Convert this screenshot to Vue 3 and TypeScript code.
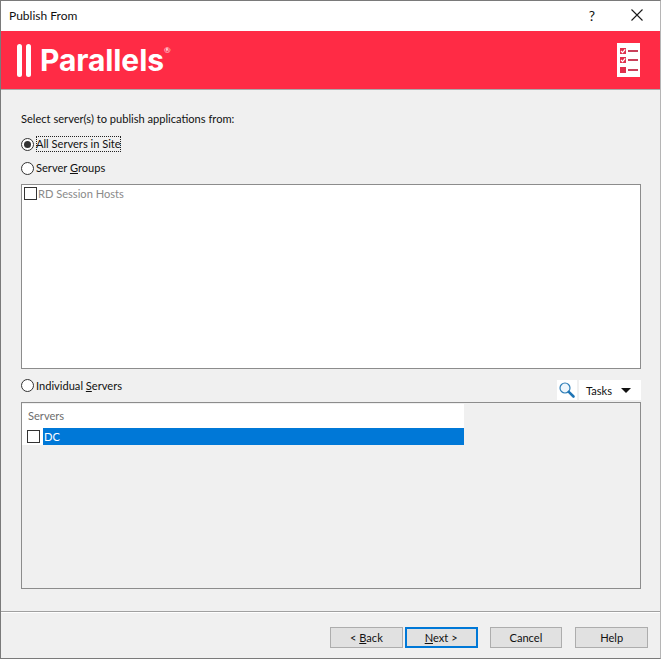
<template>
  <div class="dialog">
    <header class="titlebar">
      <span class="title">Publish From</span>
      <span class="help-btn">?</span>
      <svg class="close-btn" width="12" height="12" viewBox="0 0 12 12">
        <path d="M0.5 0.5 L11.5 11.5 M11.5 0.5 L0.5 11.5" stroke="#1a1a1a" stroke-width="1.1" fill="none" />
      </svg>
    </header>

    <div class="banner">
      <div class="logo">
        <span class="logo-bars"><i></i><i></i></span>
        <span class="logo-word">Parallels</span>
        <span class="logo-reg">®</span>
      </div>
      <svg class="banner-icon" width="23" height="34" viewBox="0 0 23 34">
        <rect width="23" height="34" fill="#fff" />
        <rect x="3" y="5" width="6" height="6" fill="#e0304c" />
        <rect x="3" y="14" width="6" height="6" fill="#e0304c" />
        <rect x="3" y="24" width="6" height="6" fill="#e0304c" />
        <path d="M4 8 L5.6 9.6 L8.2 6.4 M4 17 L5.6 18.6 L8.2 15.4" stroke="#fff" stroke-width="1.2" fill="none" />
        <rect x="11" y="7" width="10" height="2" fill="#c9405a" />
        <rect x="11" y="16" width="10" height="2" fill="#c9405a" />
        <rect x="11" y="26" width="10" height="2" fill="#c9405a" />
      </svg>
    </div>

    <main class="content">
      <p class="prompt">Select server(s) to publish applications from:</p>

      <label class="radio-row first">
        <span class="radio checked"></span>
        <span class="focused">All Servers in Site</span>
      </label>
      <label class="radio-row second">
        <span class="radio"></span>
        <span>Server <u>G</u>roups</span>
      </label>

      <div class="group-list">
        <div class="check-row disabled">
          <span class="check"></span>
          <span>RD Session Hosts</span>
        </div>
      </div>

      <div class="individual-row">
        <label class="radio-row">
          <span class="radio"></span>
          <span>Individual <u>S</u>ervers</span>
        </label>
        <div class="tools">
          <span class="tool search">
            <svg width="18" height="18" viewBox="0 0 18 18">
              <circle cx="7" cy="7" r="5" fill="#eef6fc" stroke="#2f7fb8" stroke-width="1.2" />
              <path d="M10.8 10.8 L15.5 15.5" stroke="#1f75b5" stroke-width="2.6" stroke-linecap="round" />
            </svg>
          </span>
          <span class="tool tasks">
            Tasks
            <span class="caret"></span>
          </span>
        </div>
      </div>

      <div class="server-box">
        <div class="server-table">
          <div class="server-head">Servers</div>
          <div class="server-row">
            <span class="check"></span>
            <span class="server-name">DC</span>
          </div>
        </div>
      </div>
    </main>

    <footer class="footer">
      <button type="button" class="btn">&lt; <u>B</u>ack</button>
      <button type="button" class="btn primary"><u>N</u>ext &gt;</button>
      <button type="button" class="btn cancel">Cancel</button>
      <button type="button" class="btn help">Help</button>
    </footer>
  </div>
</template>

<script setup lang="ts">
</script>

<style>
html,
body {
  margin: 0;
  background: #f0f0f0;
}
</style>

<style scoped>
.dialog {
  box-sizing: border-box;
  width: 661px;
  height: 659px;
  border: 1px solid #7a7a7a;
  border-right-color: #b5b5b5;
  background: #f0f0f0;
  display: flex;
  flex-direction: column;
  font-family: Lato, "Noto Sans", sans-serif;
  font-size: 11.1px;
  color: #111;
}

.titlebar {
  height: 30px;
  background: #fff;
  display: flex;
  align-items: center;
  padding: 0 17px 2px 8px;
  box-sizing: border-box;
}

.title {
  flex: 1;
  font-size: 12px;
}

.help-btn {
  font-size: 14px;
  margin-right: 36px;
}

.banner {
  height: 58px;
  background: #ff2b45;
  border-bottom: 1px solid #a9a9a9;
  display: flex;
  align-items: center;
  justify-content: space-between;
  padding: 0 20px 0 16px;
}

.logo {
  display: flex;
  align-items: center;
  color: #fff;
}

.logo-bars {
  display: flex;
  gap: 4px;
  margin-right: 9px;
}

.logo-bars i {
  display: block;
  width: 5px;
  height: 33px;
  border-radius: 3px;
  background: #fff;
}

.logo-word {
  font-family: Inter, sans-serif;
  font-weight: 700;
  font-size: 30px;
  line-height: 32px;
  letter-spacing: -0.1px;
}

.logo-reg {
  font-size: 8px;
  align-self: flex-start;
  margin-top: 1px;
}

.content {
  flex: 1;
  display: flex;
  flex-direction: column;
  padding: 20px 19px 0 20px;
  min-height: 0;
}

.prompt {
  margin: 0;
  line-height: 18px;
}

.radio-row {
  display: flex;
  align-items: center;
  gap: 2px;
  height: 16px;
  line-height: 16px;
}

.radio-row.first {
  margin-top: 8px;
}

.radio-row.second {
  margin-top: 8px;
}

.radio {
  box-sizing: border-box;
  width: 13px;
  height: 13px;
  border: 1px solid #333;
  border-radius: 50%;
  background: #fff;
  position: relative;
}

.radio.checked::after {
  content: "";
  position: absolute;
  left: 2px;
  top: 2px;
  width: 7px;
  height: 7px;
  border-radius: 50%;
  background: #333;
}

.focused {
  outline: 1px dotted #222;
  outline-offset: -1px;
}

.group-list {
  box-sizing: border-box;
  height: 185px;
  margin-top: 8px;
  background: #fff;
  border: 1px solid #8c8c8c;
  padding: 2px 2px;
}

.check-row {
  display: flex;
  align-items: center;
  gap: 1px;
}

.check-row.disabled {
  color: #8a8a8a;
}

.check {
  box-sizing: border-box;
  width: 13px;
  height: 13px;
  border: 1px solid #333;
  background: #fff;
}

.individual-row {
  display: flex;
  justify-content: space-between;
  align-items: center;
  height: 33px;
}

.tools {
  display: flex;
  gap: 2px;
  align-self: flex-end;
  margin-bottom: 2px;
}

.tool {
  height: 20px;
  background: #fff;
  display: flex;
  align-items: center;
}

.search {
  width: 20px;
  justify-content: center;
}

.tasks {
  width: 62px;
  padding-left: 7px;
  box-sizing: border-box;
  gap: 9px;
}

.caret {
  width: 0;
  height: 0;
  border-left: 5px solid transparent;
  border-right: 5px solid transparent;
  border-top: 5px solid #111;
}

.server-box {
  box-sizing: border-box;
  height: 187px;
  border: 1px solid #8c8c8c;
  background: #f0f0f0;
  padding-top: 1px;
}

.server-table {
  width: 442px;
}

.server-head {
  height: 24px;
  line-height: 24px;
  padding-left: 6px;
  background: #fff;
  color: #6d6d6d;
}

.server-row {
  display: flex;
  align-items: center;
  padding-left: 5px;
  gap: 3px;
  background: #fff;
  height: 17px;
}

.server-name {
  flex: 1;
  background: #0078d7;
  color: #fff;
  height: 17px;
  line-height: 17px;
  padding-left: 1px;
}

.footer {
  box-sizing: border-box;
  height: 47px;
  border-top: 1px solid #a0a0a0;
  box-shadow: inset 0 1px 0 #fff;
  display: flex;
  align-items: flex-start;
  padding: 15px 12px 0 329px;
}

.btn {
  box-sizing: border-box;
  width: 73px;
  height: 21px;
  padding: 0;
  border: 1px solid #adadad;
  background: #e1e1e1;
  font: inherit;
  color: #111;
}

.btn.primary {
  margin-left: 2px;
  border: 2px solid #0078d7;
}

.btn.cancel {
  margin-left: 12px;
}

.btn.help {
  margin-left: 13px;
}
</style>
